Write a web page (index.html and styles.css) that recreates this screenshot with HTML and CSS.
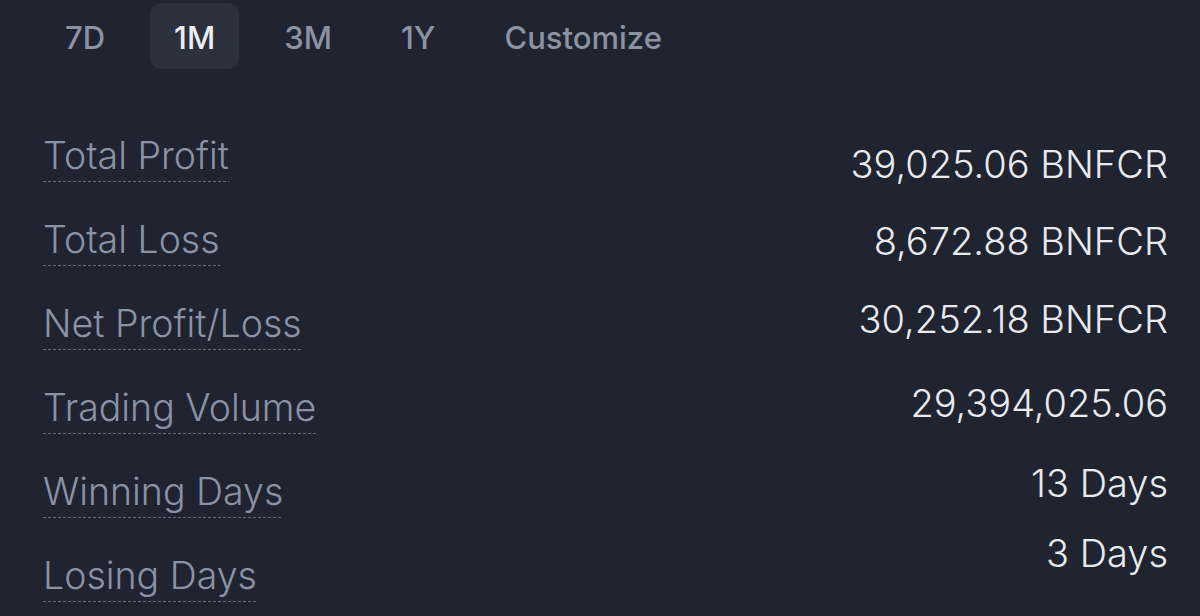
FILE: index.html
```html
<!DOCTYPE html>
<html lang="en">
<head>
<meta charset="utf-8">
<title>PnL Analysis</title>
<link rel="stylesheet" href="styles.css">
</head>
<body>
<div class="panel">
  <nav class="tabs">
    <span class="tab">7D</span>
    <span class="tab tab-active">1M</span>
    <span class="tab">3M</span>
    <span class="tab">1Y</span>
    <span class="tab">Customize</span>
  </nav>
  <section class="stats">
    <div class="labels">
      <span class="label">Total Profit</span>
      <span class="label">Total Loss</span>
      <span class="label">Net Profit/Loss</span>
      <span class="label">Trading Volume</span>
      <span class="label">Winning Days</span>
      <span class="label">Losing Days</span>
    </div>
    <div class="values">
      <span class="value">39,025.06 BNFCR</span>
      <span class="value">8,672.88 BNFCR</span>
      <span class="value">30,252.18 BNFCR</span>
      <span class="value">29,394,025.06</span>
      <span class="value">13 Days</span>
      <span class="value">3 Days</span>
    </div>
  </section>
</div>
</body>
</html>
```

FILE: styles.css
```css
* { box-sizing: border-box; }
html, body {
  margin: 0;
  padding: 0;
  background: #1f2430;
  width: 1200px;
  height: 616px;
  overflow: hidden;
}
.panel {
  font-family: "Inter", "Noto Sans", sans-serif;
  padding-top: 3px;
}
.tabs {
  display: flex;
  gap: 21px;
  padding-left: 41px;
}
.tab {
  height: 66px;
  padding: 3px 24px 0;
  display: flex;
  align-items: center;
  font-size: 31px;
  font-weight: 500;
  color: #8b93a3;
  border-radius: 11px;
}
.tab-active {
  background: #2a303c;
  color: #eceef2;
}
.stats {
  display: flex;
  justify-content: space-between;
  padding: 0 32px 0 43px;
  margin-top: 65px;
}
.labels {
  display: flex;
  flex-direction: column;
  align-items: flex-start;
  gap: 36px;
}
.label {
  font-size: 37.5px;
  font-weight: 300;
  line-height: 44px;
  height: 48px;
  color: #8a93a5;
  background: repeating-linear-gradient(to right, #626a7a 0 3px, transparent 3px 5px) left bottom / 100% 1px no-repeat;
}
.values {
  display: flex;
  flex-direction: column;
  align-items: flex-end;
  padding-top: 8px;
}
.value {
  font-size: 38px;
  font-weight: 300;
  line-height: 44px;
  color: #e8eaee;
}
.value:nth-child(2) { margin-top: 33px; }
.value:nth-child(3) { margin-top: 34px; }
.value:nth-child(4) { margin-top: 40px; }
.value:nth-child(5) { margin-top: 36px; }
.value:nth-child(6) { margin-top: 26px; }
```
